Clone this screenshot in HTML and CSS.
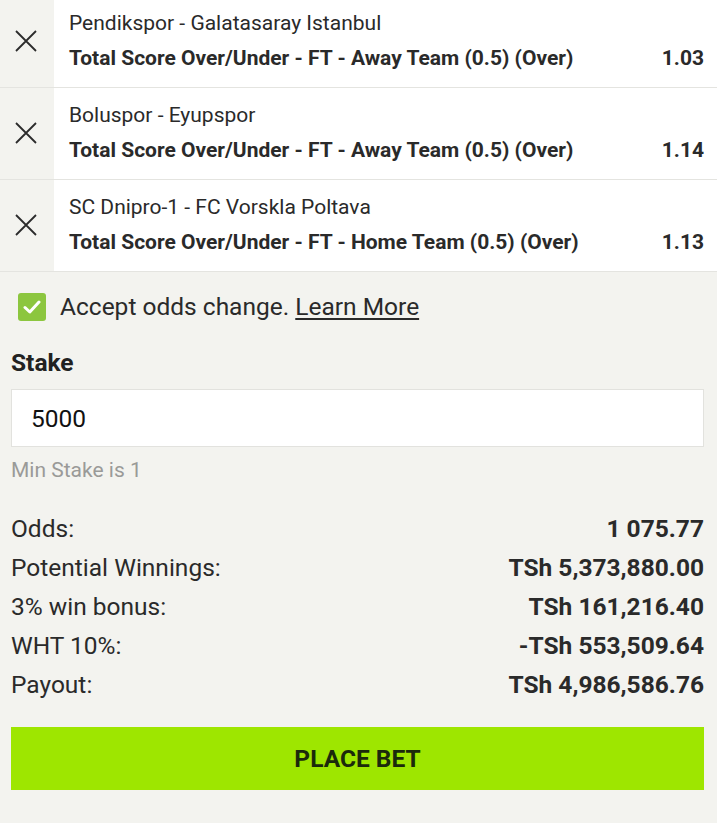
FILE: index.html
```html
<!DOCTYPE html>
<html lang="en">
<head>
    <meta charset="UTF-8">
    <meta name="viewport" content="width=device-width, initial-scale=1.0">
    <title>Betslip</title>
    <link rel="stylesheet" href="styles.css">
</head>
<body>
    <div class="betslip">
        <div class="selections">
            <div class="selection">
                <button class="remove" aria-label="Remove">
                    <svg width="22" height="22" viewBox="0 0 22 22"><path d="M1 1 L21 21 M21 1 L1 21" stroke="#2b2b2b" stroke-width="1.8" fill="none"/></svg>
                </button>
                <div class="selection-info">
                    <div class="match">Pendikspor - Galatasaray Istanbul</div>
                    <div class="market">
                        <span>Total Score Over/Under - FT - Away Team (0.5) (Over)</span>
                        <span class="price">1.03</span>
                    </div>
                </div>
            </div>
            <div class="selection">
                <button class="remove" aria-label="Remove">
                    <svg width="22" height="22" viewBox="0 0 22 22"><path d="M1 1 L21 21 M21 1 L1 21" stroke="#2b2b2b" stroke-width="1.8" fill="none"/></svg>
                </button>
                <div class="selection-info">
                    <div class="match">Boluspor - Eyupspor</div>
                    <div class="market">
                        <span>Total Score Over/Under - FT - Away Team (0.5) (Over)</span>
                        <span class="price">1.14</span>
                    </div>
                </div>
            </div>
            <div class="selection">
                <button class="remove" aria-label="Remove">
                    <svg width="22" height="22" viewBox="0 0 22 22"><path d="M1 1 L21 21 M21 1 L1 21" stroke="#2b2b2b" stroke-width="1.8" fill="none"/></svg>
                </button>
                <div class="selection-info">
                    <div class="match">SC Dnipro-1 - FC Vorskla Poltava</div>
                    <div class="market">
                        <span>Total Score Over/Under - FT - Home Team (0.5) (Over)</span>
                        <span class="price">1.13</span>
                    </div>
                </div>
            </div>
        </div>

        <label class="accept">
            <span class="checkbox">
                <svg width="18" height="14" viewBox="0 0 18 14"><path d="M2 7.5 L6.8 12 L16 2" stroke="#fff" stroke-width="3" fill="none" stroke-linecap="round" stroke-linejoin="round"/></svg>
            </span>
            <span>Accept odds change. <a href="#" class="learn">Learn More</a></span>
        </label>

        <div class="stake">
            <div class="stake-label">Stake</div>
            <input type="text" class="stake-input" value="5000">
            <div class="min-stake">Min Stake is 1</div>
        </div>

        <div class="summary">
            <div class="summary-row"><span>Odds:</span><span class="value">1 075.77</span></div>
            <div class="summary-row"><span>Potential Winnings:</span><span class="value">TSh 5,373,880.00</span></div>
            <div class="summary-row"><span>3% win bonus:</span><span class="value">TSh 161,216.40</span></div>
            <div class="summary-row"><span>WHT 10%:</span><span class="value">-TSh 553,509.64</span></div>
            <div class="summary-row"><span>Payout:</span><span class="value">TSh 4,986,586.76</span></div>
        </div>

        <button class="place-bet">PLACE BET</button>
    </div>
</body>
</html>
```

FILE: styles.css
```css
body {
    font-family: Roboto, "Liberation Sans", sans-serif;
    background-color: #f3f3ef;
    color: #222;
    margin: 0;
}

.betslip {
    width: 717px;
}

.selections {
    margin-top: -4px;
}

.selection {
    display: flex;
    height: 91px;
    border-bottom: 1px solid #e4e4e0;
}

.remove {
    width: 54px;
    flex-shrink: 0;
    background: none;
    border: none;
    padding: 0 2px 2px 0;
    display: flex;
    align-items: center;
    justify-content: center;
    cursor: pointer;
}

.selection-info {
    flex: 1;
    background-color: #fff;
    padding: 14px 13px 0 15px;
}

.match {
    font-size: 21px;
    line-height: 26px;
    color: #2a2a2a;
}

.market {
    display: flex;
    justify-content: space-between;
    margin-top: 9px;
    font-size: 21px;
    line-height: 26px;
    font-weight: bold;
    color: #2a2a2a;
}

.accept {
    display: flex;
    align-items: center;
    gap: 14px;
    padding: 20px 18px 0;
    font-size: 24.5px;
    color: #2a2a2a;
}

.checkbox {
    width: 28px;
    height: 28px;
    border-radius: 3px;
    background-color: #8cc63f;
    display: flex;
    align-items: center;
    justify-content: center;
}

.learn {
    color: #2a2a2a;
    text-decoration: underline;
    text-underline-offset: 3px;
}

.stake {
    padding: 0 13px 0 11px;
}

.stake-label {
    font-size: 24.5px;
    font-weight: bold;
    margin-top: 27px;
    line-height: 30px;
}

.stake-input {
    display: block;
    box-sizing: border-box;
    width: 100%;
    height: 58px;
    margin-top: 11px;
    border: 1px solid #e2e2de;
    background-color: #fff;
    padding: 0 19px;
    font-family: inherit;
    font-size: 24.5px;
    color: #111;
    outline: none;
}

.min-stake {
    margin-top: 11px;
    font-size: 21px;
    line-height: 24px;
    color: #9a9a98;
}

.summary {
    padding: 27px 13px 0 11px;
}

.summary-row {
    display: flex;
    justify-content: space-between;
    font-size: 24.5px;
    line-height: 39px;
    color: #2a2a2a;
}

.summary-row .value {
    font-weight: bold;
}

.place-bet {
    display: block;
    width: 693px;
    height: 63px;
    margin: 23px 0 0 11px;
    border: none;
    background-color: #9ee600;
    color: #1b2a0b;
    font-family: inherit;
    font-size: 24.5px;
    font-weight: bold;
    cursor: pointer;
}
```
